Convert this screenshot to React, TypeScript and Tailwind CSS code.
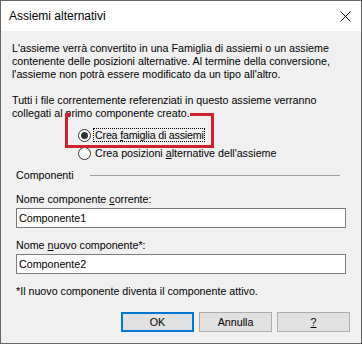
import React from "react";

function Radio({ checked }: { checked?: boolean }) {
  return (
    <span className="w-[13px] h-[13px] rounded-full border border-[#333] bg-white flex items-center justify-center shrink-0">
      {checked && <span className="w-[7px] h-[7px] rounded-full bg-[#333]" />}
    </span>
  );
}

export default function App() {
  return (
    <div className="relative w-[362px] h-[344px] border border-[#666] bg-[#f0f0f0] flex flex-col font-['Liberation_Sans',Arial,sans-serif] text-[10.7px] text-black">
      {/* Title bar */}
      <div className="h-[30px] bg-white flex items-center justify-between pl-[8px] pr-[10px] shrink-0">
        <span className="text-[12px]">Assiemi alternativi</span>
        <svg width="11" height="11" viewBox="0 0 11 11" className="mt-[1px]">
          <path d="M0.5 0.5 L10.5 10.5 M10.5 0.5 L0.5 10.5" stroke="#111" strokeWidth="1" />
        </svg>
      </div>

      {/* Body */}
      <div className="flex flex-col px-[11px] pt-[11px] leading-[13px]">
        <p>
          L'assieme verrà convertito in una Famiglia di assiemi o un assieme
          <br />
          contenente delle posizioni alternative. Al termine della conversione,
          <br />
          l'assieme non potrà essere modificato da un tipo all'altro.
        </p>
        <p className="mt-[13px]">
          Tutti i file correntemente referenziati in questo assieme verranno
          <br />
          collegati al p
          <span className="relative z-10 bg-[#f0f0f0]">rimo componente creato.</span>
        </p>

        <div className="flex flex-col gap-[5px] pl-[66px] mt-[8px]">
          <div className="flex items-center gap-[2px]">
            <Radio checked />
            <span className="border border-dotted border-black pl-[1px] leading-[12px] tracking-[-0.2px]">
              Crea <span className="underline">f</span>amiglia di assiemi
            </span>
          </div>
          <div className="flex items-center gap-[4px]">
            <Radio />
            <span>
              Crea posizioni <span className="underline">a</span>lternative dell'assieme
            </span>
          </div>
        </div>

        <div className="flex flex-col px-[4px]">
          <div className="flex items-center mt-[9px]">
            <span>Componenti</span>
            <div className="flex-1 ml-[16px] mr-[6px] h-[2px] border-t border-[#a0a0a0] border-b-white" />
          </div>

          <span className="mt-[11px]">
            Nome componente <span className="underline">c</span>orrente:
          </span>
          <div className="mt-[2px] h-[20px] border border-[#7a7a7a] bg-white flex items-center px-[2px]">
            Componente1
          </div>

          <span className="mt-[11px]">
            Nome <span className="underline">n</span>uovo componente*:
          </span>
          <div className="mt-[2px] h-[20px] border border-[#7a7a7a] bg-white flex items-center px-[2px]">
            Componente2
          </div>

          <span className="mt-[11px]">*Il nuovo componente diventa il componente attivo.</span>
        </div>

        <div className="flex justify-end gap-[5px] mt-[14px]">
          <button className="w-[73px] h-[20px] bg-[#e1e1e1] border-2 border-[#0078d7] flex items-center justify-center">
            OK
          </button>
          <button className="w-[73px] h-[20px] bg-[#e1e1e1] border border-[#adadad] flex items-center justify-center">
            Annulla
          </button>
          <button className="w-[73px] h-[20px] bg-[#e1e1e1] border border-[#adadad] flex items-center justify-center">
            <span className="underline">?</span>
          </button>
        </div>
      </div>

      {/* Annotation */}
      <div className="absolute left-[64px] top-[112px] w-[149px] h-[35px] border-[3px] border-[#d0242c] z-[5]" />
    </div>
  );
}
